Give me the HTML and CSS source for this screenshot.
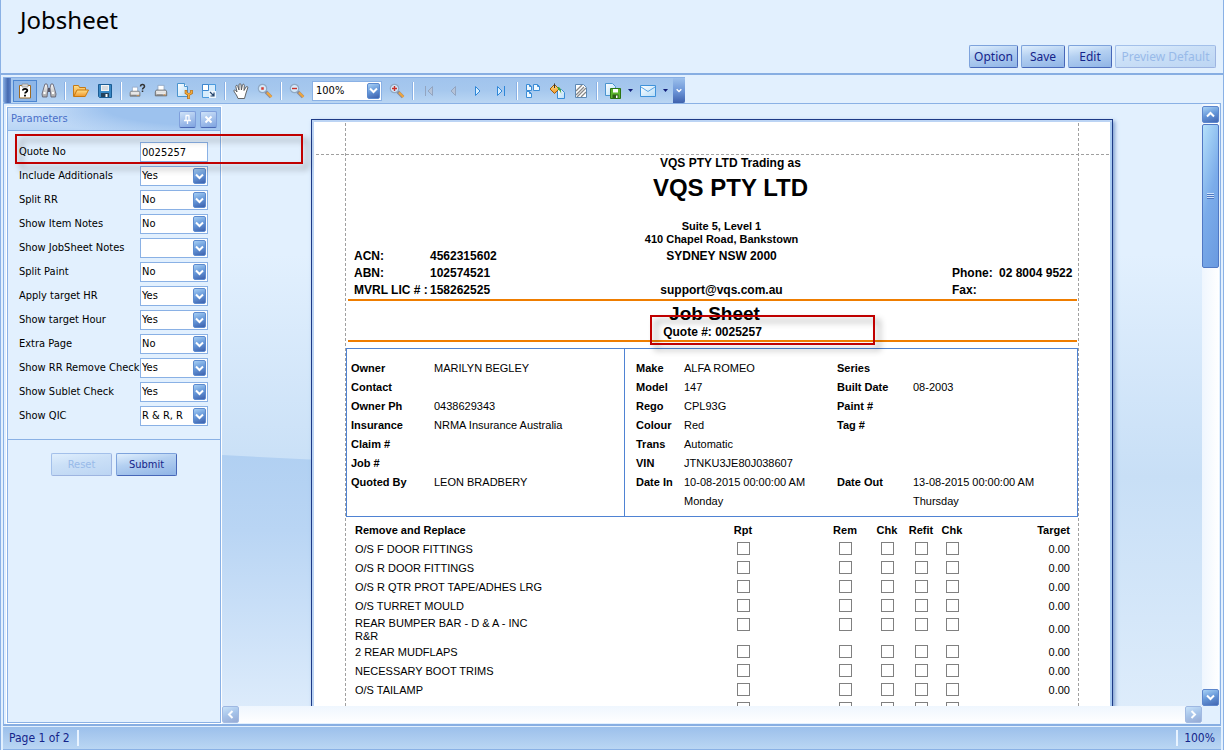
FILE: index.html
```html
<!DOCTYPE html>
<html lang="en">
<head>
<meta charset="utf-8">
<title>Jobsheet</title>
<link rel="stylesheet" href="styles.css">
</head>
<body>
<svg class="defs" width="0" height="0" aria-hidden="true">
  <defs>
    <linearGradient id="gold" x1="0" y1="0" x2="0" y2="1"><stop offset="0" stop-color="#ffe08a"/><stop offset="1" stop-color="#f0962a"/></linearGradient>
    <linearGradient id="sheet" x1="0" y1="0" x2="1" y2="1"><stop offset="0" stop-color="#ffffff"/><stop offset="1" stop-color="#b4dcf8"/></linearGradient>
    <linearGradient id="steel" x1="0" y1="0" x2="0" y2="1"><stop offset="0" stop-color="#fafafa"/><stop offset="1" stop-color="#a8a8a8"/></linearGradient>
    <symbol id="chev" viewBox="0 0 9 7"><path d="M1 1.5 4.500 5 8 1.500" fill="none" stroke="#fff" stroke-width="2"/></symbol>
    <symbol id="lens" viewBox="0 0 16 16"><path d="m8.500 8.500 5.500 5.500" stroke="#8a8a9a" stroke-width="3.600"/><path d="m10 9.500 4.500 4.500" stroke="#f0a63c" stroke-width="2.200"/><circle cx="5.500" cy="5.500" r="4.200" fill="#d4e8fa" stroke="#90a9c4" stroke-width="1.200"/></symbol>
    <symbol id="printer" viewBox="0 0 16 16"><path d="M4.500 7V1.500h7V7" fill="#fff" stroke="#8fa6c4"/><path d="M2.500 7h11l1 2v4.500h-13V9z" fill="url(#steel)" stroke="#666"/><path d="M3 10.500h10" stroke="#fff"/><path d="M3 12.500h7" stroke="#777"/><path d="M11 12h2v1h-2z" fill="#e88a20"/></symbol>
  </defs>
</svg>
<div class="app">
  <header class="top">
    <h1 class="title">Jobsheet</h1>
    <div class="actions">
      <button class="btn btn-option" type="button">Option</button>
      <button class="btn" type="button">Save</button>
      <button class="btn" type="button">Edit</button>
      <button class="btn btn-preview" type="button" disabled>Preview Default</button>
    </div>
  </header>

  <main class="viewer">
    <div class="toolbar" role="toolbar" aria-label="Report">
      <span class="grip"></span>
      <button class="tool pressed" type="button" aria-label="Parameters"><svg viewBox="0 0 16 16"><path d="M2.500 2.500h11v12.500h-11z" fill="#fff" stroke="#a06a22"/><path d="M5 1h6v3H5z" fill="#d9d9d9" stroke="#8a8a8a" stroke-width=".7"/><path d="M5.800 7.500c0-2.300 4.500-2.300 4.500 0 0 1.500-2.200 1.300-2.200 3M8 11.800v1.600" fill="none" stroke="#000" stroke-width="1.800"/></svg></button>
      <button class="tool" type="button" aria-label="Search"><svg viewBox="0 0 16 16"><path d="m3 4 1-3h2l1 4-1 9H1.500L1 11zM13 4l-1-3h-2L9 5l1 9h4.500l.5-3z" fill="url(#steel)" stroke="#667" stroke-width=".9"/><path d="M7 5h2v4H7z" fill="#556"/><path d="M2.500 10h2M11 10h2" stroke="#fff" stroke-width="2"/></svg></button>
      <span class="sep"></span>
      <button class="tool" type="button" aria-label="Open"><svg viewBox="0 0 16 16"><path d="M.5 13.500v-11h5l1 2h6v3" fill="url(#gold)" stroke="#c47a18"/><path d="M.8 13.500 4 7h11.500l-3.300 6.500z" fill="url(#gold)" stroke="#c8780f"/></svg></button>
      <button class="tool" type="button" aria-label="Save report"><svg viewBox="0 0 16 16"><path d="M1.500 1.500h13v13h-12l-1-1z" fill="#3988c4" stroke="#1b5c94"/><path d="M4 2h8v6H4z" fill="#f4f4f4"/><path d="M5 4h6M5 6h6" stroke="#b9c3cc"/><path d="M4 10h8v4H4z" fill="#23415c"/><path d="M8.500 11h2v3h-2z" fill="#fff"/></svg></button>
      <span class="sep"></span>
      <button class="tool" type="button" aria-label="Print with options"><svg viewBox="0 0 16 16"><use href="#printer" x="0" y="2" width="12" height="14"/><path d="M11.500 3.500c0-3 4-2.500 4 0 0 1.500-2 1.300-2 3M13.500 7.500V9" fill="none" stroke="#333" stroke-width="1.500"/></svg></button>
      <button class="tool" type="button" aria-label="Print"><svg viewBox="0 0 16 16"><use href="#printer" x="1" y="1" width="14" height="14"/></svg></button>
      <button class="tool" type="button" aria-label="Page setup"><svg viewBox="0 0 16 16"><path d="M.5.5h7l3 3v10H.5z" fill="url(#sheet)" stroke="#4a94cf"/><path d="M7.500.5v3h3" fill="#fff" stroke="#4a94cf"/><path d="M9 7v3l2.500 1.500V16M14.500 7v3L12 11.500" fill="none" stroke="#b36a0c" stroke-width="2.600"/><path d="M9 7.500v2.300l2.700 1.700v4M14.500 7.500v2.300L12 11.500" fill="none" stroke="#f5ab3d" stroke-width="1.400"/></svg></button>
      <button class="tool" type="button" aria-label="Scale"><svg viewBox="0 0 16 16"><path d="M1.500 1.500h13v13h-13z" fill="#d7ecfc" stroke="#4b9add"/><path d="M1.500 1.500h6v6h-6z" fill="#fff" stroke="#3d86cf"/><path d="M8 8h7v7H8z" fill="#eef7ff"/><path d="m9 9 4 4M13 9.500V13H9.500" fill="none" stroke="#26466e" stroke-width="1.200"/></svg></button>
      <span class="sep"></span>
      <button class="tool" type="button" aria-label="Hand tool"><svg viewBox="0 0 16 16"><path d="M5 15.500C4 12 1 9 .8 7.800 1 6.500 2.700 7 4 9L2.800 3.500c0-1.500 1.700-1.500 2 0L6 7 6 1.800c.2-1.500 1.900-1.500 2 0L8.400 7l1-5c.5-1.300 2-.9 1.900.4L11 7.500 13 4c1-1 2.200-.3 1.700 1L13 10l-1.500 5.500z" fill="#fff" stroke="#555" stroke-width=".9"/></svg></button>
      <button class="tool" type="button" aria-label="Magnifier"><svg viewBox="0 0 16 16"><use href="#lens" width="16" height="16"/><path d="M4.500 4.500h2v2h-2z" fill="#d53a2e" stroke="#d53a2e" stroke-width=".5"/></svg></button>
      <span class="sep"></span>
      <button class="tool" type="button" aria-label="Zoom out"><svg viewBox="0 0 16 16"><use href="#lens" width="16" height="16"/><path d="M3 5.500h5" stroke="#c8322a" stroke-width="1.400"/></svg></button>
      <div class="combo combo-zoom">
        <select aria-label="Zoom"><option>100%</option></select>
        <span class="drop"><svg><use href="#chev"/></svg></span>
      </div>
      <button class="tool" type="button" aria-label="Zoom in"><svg viewBox="0 0 16 16"><use href="#lens" width="16" height="16"/><path d="M3 5.500h5M5.500 3v5" stroke="#c8322a" stroke-width="1.400"/></svg></button>
      <span class="sep"></span>
      <button class="tool" type="button" aria-label="First page" disabled><svg viewBox="0 0 16 16"><path d="M4.500 3v10M11.500 3.500v9L7 8z" fill="#b5c3d8" stroke="#93a5c0"/></svg></button>
      <button class="tool" type="button" aria-label="Previous page" disabled><svg viewBox="0 0 16 16"><path d="M10.500 3.500v9L6 8z" fill="#b5c3d8" stroke="#93a5c0"/></svg></button>
      <button class="tool" type="button" aria-label="Next page"><svg viewBox="0 0 16 16"><path d="M6.500 3.500v9L11 8z" fill="#d6edff" stroke="#2f87d8"/></svg></button>
      <button class="tool" type="button" aria-label="Last page"><svg viewBox="0 0 16 16"><path d="M4.500 3.500v9L9 8zM11.500 3v10" fill="#d6edff" stroke="#2f87d8"/></svg></button>
      <span class="sep"></span>
      <button class="tool" type="button" aria-label="Multiple pages"><svg viewBox="0 0 16 16"><path d="M1.500 1.500h3l2 2v4h-5zM8.500 1.500h4l2 2v4h-6zM1.500 8.500h3l2 2v4h-5z" fill="#eef8ff" stroke="#3a8cd6"/><path d="M4.500 1.500v2h2M12.500 1.500v2h2M4.500 8.500v2h2" fill="none" stroke="#3a8cd6"/></svg></button>
      <button class="tool" type="button" aria-label="Page colour"><svg viewBox="0 0 16 16"><path d="M8.500 6.500h4l3 3v6h-7z" fill="url(#sheet)" stroke="#3a8cd6"/><path d="m1 6 4.500-4.500L10 6l-4.500 4.500z" fill="url(#gold)" stroke="#a15d0c"/><path d="M5.500 5V.5" stroke="#333"/><path d="M8.500 4c3 0 3.700 2.500 3.700 7-1-3-1.700-4-3-4z" fill="#3fa53a"/></svg></button>
      <button class="tool" type="button" aria-label="Watermark"><svg viewBox="0 0 16 16"><path d="M2.500 1.500h8l3 3v10h-11z" fill="#fff" stroke="#5c88b4"/><path d="m3 8 6-6M3 12l8-8M4 14l9-9M8 14l5-5" stroke="#888" stroke-width="1.300"/></svg></button>
      <span class="sep"></span>
      <button class="tool" type="button" aria-label="Export"><svg viewBox="0 0 16 16"><path d="M.5.5h7l3 3v9H.5z" fill="url(#sheet)" stroke="#4a94cf"/><path d="M5.500 5.500h10v10h-10z" fill="#5bb52c" stroke="#2c7412"/><path d="M8 6h5v3.500H8z" fill="#fff"/><path d="M7.500 11.500h6V15h-6z" fill="#2c5f18"/><path d="M11 12.500h1.500V15H11z" fill="#fff"/></svg></button>
      <button class="caret" type="button" aria-label="Export options"><svg viewBox="0 0 5 3"><path d="M0 0h5L2.500 3z" fill="#101c78"/></svg></button>
      <button class="tool" type="button" aria-label="Send by e-mail"><svg viewBox="0 0 16 16"><path d="M.5 2.500h15v11H.5z" fill="url(#sheet)" stroke="#3f92da"/><path d="m1 4 7 4.500L15 4" fill="none" stroke="#5aa4e2"/></svg></button>
      <button class="caret" type="button" aria-label="E-mail options"><svg viewBox="0 0 5 3"><path d="M0 0h5L2.500 3z" fill="#101c78"/></svg></button>
      <button class="overflow" type="button" aria-label="More"><svg width="6" height="5"><use href="#chev"/></svg></button>
    </div>

    <div class="work">
      <aside class="params">
        <div class="params-head">
          <h2>Parameters</h2>
          <button class="mini" type="button" aria-label="Pin"><svg viewBox="0 0 9 9"><path d="M2.500.5h4M3 1v4M6 1v4M1 5.500h7M4.500 6v3" fill="none" stroke="#fff" stroke-width="1.300"/></svg></button>
          <button class="mini" type="button" aria-label="Close"><svg viewBox="0 0 9 9"><path d="m1.500 1.500 6 6m0-6-6 6" stroke="#fff" stroke-width="2"/></svg></button>
        </div>
        <form class="fields">
          <div class="field"><label for="p1">Quote No</label><input id="p1" class="text" type="text" value="0025257"><span class="callout callout-field"></span></div>
          <div class="field"><label for="p2">Include Additionals</label><div class="combo"><select id="p2"><option>Yes</option></select><span class="drop"><svg><use href="#chev"/></svg></span></div></div>
          <div class="field"><label for="p3">Split RR</label><div class="combo"><select id="p3"><option>No</option></select><span class="drop"><svg><use href="#chev"/></svg></span></div></div>
          <div class="field"><label for="p4">Show Item Notes</label><div class="combo"><select id="p4"><option>No</option></select><span class="drop"><svg><use href="#chev"/></svg></span></div></div>
          <div class="field"><label for="p5">Show JobSheet Notes</label><div class="combo"><select id="p5"><option></option></select><span class="drop"><svg><use href="#chev"/></svg></span></div></div>
          <div class="field"><label for="p6">Split Paint</label><div class="combo"><select id="p6"><option>No</option></select><span class="drop"><svg><use href="#chev"/></svg></span></div></div>
          <div class="field"><label for="p7">Apply target HR</label><div class="combo"><select id="p7"><option>Yes</option></select><span class="drop"><svg><use href="#chev"/></svg></span></div></div>
          <div class="field"><label for="p8">Show target Hour</label><div class="combo"><select id="p8"><option>Yes</option></select><span class="drop"><svg><use href="#chev"/></svg></span></div></div>
          <div class="field"><label for="p9">Extra Page</label><div class="combo"><select id="p9"><option>No</option></select><span class="drop"><svg><use href="#chev"/></svg></span></div></div>
          <div class="field"><label for="p10">Show RR Remove Check</label><div class="combo"><select id="p10"><option>Yes</option></select><span class="drop"><svg><use href="#chev"/></svg></span></div></div>
          <div class="field"><label for="p11">Show Sublet Check</label><div class="combo"><select id="p11"><option>Yes</option></select><span class="drop"><svg><use href="#chev"/></svg></span></div></div>
          <div class="field"><label for="p12">Show QIC</label><div class="combo"><select id="p12"><option>R &amp; R, R</option></select><span class="drop"><svg><use href="#chev"/></svg></span></div></div>
        </form>
        <div class="params-foot">
          <button class="btn btn-form" type="button" disabled>Reset</button>
          <button class="btn btn-form" type="button">Submit</button>
        </div>
      </aside>

      <div class="canvas">
        <article class="paper">
          <section class="letterhead">
            <dl class="ids">
              <dt>ACN:</dt><dd>4562315602</dd>
              <dt>ABN:</dt><dd>102574521</dd>
              <dt>MVRL LIC # :</dt><dd>158262525</dd>
            </dl>
            <div class="company">
              <p class="trading">VQS PTY LTD Trading as</p>
              <p class="name">VQS PTY LTD</p>
              <p class="street">Suite 5, Level 1</p>
              <p class="street">410 Chapel Road, Bankstown</p>
              <p class="city">SYDNEY NSW 2000</p>
              <p class="mail">support@vqs.com.au</p>
            </div>
            <dl class="phones">
              <dt>Phone:</dt><dd>02 8004 9522</dd>
              <dt>Fax:</dt><dd></dd>
            </dl>
          </section>
          <section class="banner">
            <h2>Job Sheet</h2>
            <p class="quote">Quote #: 0025257<span class="callout callout-quote"></span></p>
          </section>
          <section class="details">
            <dl class="owner">
              <dt>Owner</dt><dd>MARILYN BEGLEY</dd>
              <dt>Contact</dt><dd></dd>
              <dt>Owner Ph</dt><dd>0438629343</dd>
              <dt>Insurance</dt><dd>NRMA Insurance Australia</dd>
              <dt>Claim #</dt><dd></dd>
              <dt>Job #</dt><dd></dd>
              <dt>Quoted By</dt><dd>LEON BRADBERY</dd>
            </dl>
            <dl class="vehicle">
              <dt>Make</dt><dd>ALFA ROMEO</dd><dt>Series</dt><dd></dd>
              <dt>Model</dt><dd>147</dd><dt>Built Date</dt><dd>08-2003</dd>
              <dt>Rego</dt><dd>CPL93G</dd><dt>Paint #</dt><dd></dd>
              <dt>Colour</dt><dd>Red</dd><dt>Tag #</dt><dd></dd>
              <dt>Trans</dt><dd class="wide">Automatic</dd>
              <dt>VIN</dt><dd class="wide">JTNKU3JE80J038607</dd>
              <dt>Date In</dt><dd>10-08-2015 00:00:00 AM<br>Monday</dd><dt>Date Out</dt><dd>13-08-2015 00:00:00 AM<br>Thursday</dd>
            </dl>
          </section>
          <table class="items">
            <colgroup><col><col class="c-rpt"><col class="c-rem"><col class="c-chk"><col class="c-refit"><col class="c-chk2"><col class="c-target"></colgroup>
            <thead><tr><th>Remove and Replace</th><th class="rpt">Rpt</th><th>Rem</th><th>Chk</th><th>Refit</th><th>Chk</th><th>Target</th></tr></thead>
            <tbody>
              <tr><td>O/S F DOOR FITTINGS</td><td class="rpt"><input type="checkbox" aria-label="Rpt"></td><td><input type="checkbox" aria-label="Rem"></td><td><input type="checkbox" aria-label="Rem checked"></td><td><input type="checkbox" aria-label="Refit"></td><td><input type="checkbox" aria-label="Refit checked"></td><td>0.00</td></tr>
              <tr><td>O/S R DOOR FITTINGS</td><td class="rpt"><input type="checkbox" aria-label="Rpt"></td><td><input type="checkbox" aria-label="Rem"></td><td><input type="checkbox" aria-label="Rem checked"></td><td><input type="checkbox" aria-label="Refit"></td><td><input type="checkbox" aria-label="Refit checked"></td><td>0.00</td></tr>
              <tr><td>O/S R QTR PROT TAPE/ADHES LRG</td><td class="rpt"><input type="checkbox" aria-label="Rpt"></td><td><input type="checkbox" aria-label="Rem"></td><td><input type="checkbox" aria-label="Rem checked"></td><td><input type="checkbox" aria-label="Refit"></td><td><input type="checkbox" aria-label="Refit checked"></td><td>0.00</td></tr>
              <tr><td>O/S TURRET MOULD</td><td class="rpt"><input type="checkbox" aria-label="Rpt"></td><td><input type="checkbox" aria-label="Rem"></td><td><input type="checkbox" aria-label="Rem checked"></td><td><input type="checkbox" aria-label="Refit"></td><td><input type="checkbox" aria-label="Refit checked"></td><td>0.00</td></tr>
              <tr class="tall"><td>REAR BUMPER BAR - D &amp; A - INC<br>R&amp;R</td><td class="rpt"><input type="checkbox" aria-label="Rpt"></td><td><input type="checkbox" aria-label="Rem"></td><td><input type="checkbox" aria-label="Rem checked"></td><td><input type="checkbox" aria-label="Refit"></td><td><input type="checkbox" aria-label="Refit checked"></td><td>0.00</td></tr>
              <tr><td>2 REAR MUDFLAPS</td><td class="rpt"><input type="checkbox" aria-label="Rpt"></td><td><input type="checkbox" aria-label="Rem"></td><td><input type="checkbox" aria-label="Rem checked"></td><td><input type="checkbox" aria-label="Refit"></td><td><input type="checkbox" aria-label="Refit checked"></td><td>0.00</td></tr>
              <tr><td>NECESSARY BOOT TRIMS</td><td class="rpt"><input type="checkbox" aria-label="Rpt"></td><td><input type="checkbox" aria-label="Rem"></td><td><input type="checkbox" aria-label="Rem checked"></td><td><input type="checkbox" aria-label="Refit"></td><td><input type="checkbox" aria-label="Refit checked"></td><td>0.00</td></tr>
              <tr><td>O/S TAILAMP</td><td class="rpt"><input type="checkbox" aria-label="Rpt"></td><td><input type="checkbox" aria-label="Rem"></td><td><input type="checkbox" aria-label="Rem checked"></td><td><input type="checkbox" aria-label="Refit"></td><td><input type="checkbox" aria-label="Refit checked"></td><td>0.00</td></tr>
              <tr><td></td><td class="rpt"><input type="checkbox" aria-label="Rpt"></td><td><input type="checkbox" aria-label="Rem"></td><td><input type="checkbox" aria-label="Rem checked"></td><td><input type="checkbox" aria-label="Refit"></td><td><input type="checkbox" aria-label="Refit checked"></td><td></td></tr>
            </tbody>
          </table>
        </article>
      </div>

      <div class="vscroll">
        <button class="sb up" type="button" aria-label="Scroll up"><svg><use href="#chev"/></svg></button>
        <div class="thumb"><span></span></div>
        <button class="sb" type="button" aria-label="Scroll down"><svg><use href="#chev"/></svg></button>
      </div>
      <div class="hscroll">
        <button class="sb left" type="button" aria-label="Scroll left" disabled><svg><use href="#chev"/></svg></button>
        <button class="sb right" type="button" aria-label="Scroll right" disabled><svg><use href="#chev"/></svg></button>
      </div>
    </div>

    <footer class="status"><span class="page-no">Page 1 of 2</span><span class="zoom">100%</span></footer>
  </main>
</div>
</body>
</html>
```

FILE: styles.css
```css
* { box-sizing: border-box; }
html, body { height: 100%; }
body {
  margin: 0;
  overflow: hidden;
  background: #e2f0fe;
  color: #000;
  font: 11px/14px "DejaVu Sans Condensed", "DejaVu Sans", sans-serif;
}
h1, h2, p, dl, dd { margin: 0; }
h1, h2 { font-weight: normal; }
button { font: inherit; padding: 0; border: 0; background: none; display: flex; align-items: center; justify-content: center; flex: none; }
svg { display: block; overflow: visible; }
.defs { position: absolute; }

.app { height: 100%; display: flex; flex-direction: column; border: solid #8ab1e5; border-width: 0 1px; }
.top { flex: none; display: flex; flex-direction: column; justify-content: space-between; height: 75px; padding: 5px 7px 5px 19px; border-bottom: 2px solid #87aee2; }
.title { font: 24px/30px "Noto Sans", sans-serif; }
.actions { display: flex; justify-content: flex-end; gap: 3px; }
.btn {
  height: 23px;
  width: 44px;
  border: 1px solid #4767b8;
  border-top-color: #7ea3dc;
  border-left-color: #7ea3dc;
  border-radius: 2px;
  background: linear-gradient(170deg, #e0effd, #b4d0f1 40%, #8fb4e6);
  color: #14248a;
  font: 12px/16px "Noto Sans", sans-serif;
}
.btn:disabled { border-color: #a3c0ea #9db4e0 #9db4e0 #a3c0ea; background: linear-gradient(170deg, #e0effd, #cbe0f7 40%, #bcd5f3); color: #98bae9; }
.btn-option { width: 49px; }
.btn-preview { width: 101px; }
.btn-form { width: 61px; font: 11px/14px "DejaVu Sans Condensed", sans-serif; }

.viewer { flex: 1; min-height: 0; display: flex; flex-direction: column; margin: 2px 2px 0; }
.toolbar { flex: none; align-self: flex-start; display: flex; align-items: center; height: 26px; border-top: 1px solid #8ab1e5; background: linear-gradient(#a1c4ed, #a6c8ee 50%, #bad6f3); }
.grip { width: 8px; height: 25px; margin-right: 2px; border-radius: 0 0 0 2px; background: linear-gradient(90deg, #8ab1e5, #4469b0 60%, #5f86cc); }
.tool { width: 24px; height: 22px; }
.tool svg { width: 16px; height: 16px; }
.pressed { border: 1px solid #4d86d0; background: #8db6e8; }
.sep { width: 2px; height: 18px; margin: 0 3px; border-left: 1px solid #8ab1e5; border-right: 1px solid #fff; }
.caret { width: 11px; height: 22px; }
.caret svg { width: 5px; height: 3px; }
.overflow { width: 12px; height: 25px; margin-left: 2px; border-radius: 0 2px 2px 0; background: linear-gradient(#9cc0ec, #6a93d6 55%, #3f62ad); }

.combo { display: grid; width: 68px; height: 20px; border: 1px solid #8ab1e5; background: #fff; }
.combo > * { grid-area: 1 / 1; }
.combo select { appearance: none; width: 100%; height: 18px; border: 0; padding: 0 15px 0 1px; background: none; color: #000; font: inherit; }
.drop { justify-self: end; align-self: center; display: grid; place-items: center; width: 13px; height: 16px; margin-right: 1px; border: 1px solid #5d8bcf; border-radius: 2px; background: linear-gradient(160deg, #a8d0f5, #6496d8 50%, #3d60ac); pointer-events: none; }
.drop svg, .sb svg { width: 9px; height: 7px; }
.combo-zoom { width: 70px; margin: 0 3px; }
.combo-zoom select { padding-left: 3px; }

.work {
  position: relative;
  flex: 1;
  min-height: 0;
  display: grid;
  grid-template: minmax(0, 1fr) 17px / 218px minmax(0, 1fr) 17px;
  padding: 0 1px 1px 0;
  border: 1px solid #8ab1e5;
  border-bottom: 2px solid #87aee2;
}
.params { grid-row: 1 / 3; display: flex; flex-direction: column; margin: 3px 1px 0 3px; border: 1px solid #8ab1e5; outline: 1px solid #fff; z-index: 1; background: #e2f0fe; }
.params-head { flex: none; display: flex; align-items: center; gap: 4px; height: 23px; padding: 0 3px; border-bottom: 1px solid #8ab1e5; background: radial-gradient(ellipse 190px 30px at 100% 0, #9dc2ee 60%, transparent 100%), linear-gradient(#d2e4fa, #b9d5f5); color: #4a6fc8; }
.params-head h2 { flex: 1; font-size: 11px; }
.mini { width: 17px; height: 17px; border: 1px solid #7f9fdb; border-bottom-color: #4a68b4; border-radius: 2px; background: linear-gradient(160deg, #cfe3f9, #7ea3e0); }
.mini svg { width: 9px; height: 9px; }
.fields { display: grid; gap: 4px; padding: 11px 12px 13px 11px; border-bottom: 1px solid #8ab1e5; }
.field { position: relative; display: flex; align-items: center; justify-content: space-between; height: 20px; white-space: nowrap; }
.field label { width: 120px; line-height: 16px; }
.text { width: 68px; height: 20px; border: 1px solid #8ab1e5; padding: 0 1px; background: #fff; font: inherit; }
.params-foot { display: flex; justify-content: center; gap: 4px; padding-top: 13px; }
.callout { position: absolute; border: 2px solid #c00000; filter: drop-shadow(5px 5px 3px rgba(0, 0, 0, 0.4)); pointer-events: none; z-index: 2; }
.callout-field { left: -4px; top: -8px; width: 288px; height: 30px; }
.callout-quote { left: -13px; top: -8px; width: 225px; height: 30px; }

.canvas { position: relative; overflow: hidden; padding-top: 15px; background: linear-gradient(#e2f0fe 25%, #c8dff6 62%, #ddecfb); }
.canvas::before { content: ""; position: absolute; left: 0; right: 50%; top: 351px; bottom: 0; clip-path: polygon(0 0, 20% 5px, 100% 40px, 100% 100%, 0 100%); background: linear-gradient(#b1d0f2, #b9d5f4 30%, #dcebfb); }
.paper {
  position: relative;
  width: 802px;
  height: 1131px;
  margin: 0 auto;
  padding: 34px 34px 0;
  border: 1px solid #1d3a86;
  background: #fff;
  box-shadow: inset 2px 2px #bcd4f4, inset -2px 0 #a9cbf2, 2px 2px 4px #7f9fd0;
  font: 11px/13px "Liberation Sans", Arial, sans-serif;
}
.paper::before { content: ""; position: absolute; left: 33px; right: 33px; top: 3px; bottom: 3px; border: dashed #a0a0a0; border-width: 0 1px; pointer-events: none; }
.paper::after { content: ""; position: absolute; left: 4px; right: 3px; top: 34px; border-top: 1px dashed #a0a0a0; }
.letterhead { display: grid; grid-template-columns: 216px minmax(0, 1fr) 198px; height: 147px; margin: 0 1px 0 2px; border-bottom: 2px solid #ef7d00; font-weight: bold; font-size: 12px; line-height: 17px; align-items: end; }
.letterhead dl { display: grid; }
.ids { grid-template-columns: 76px 1fr; padding-left: 6px; white-space: nowrap; }
.phones { grid-template-columns: 47px 1fr; padding-left: 73px; white-space: nowrap; }
.company { align-self: stretch; text-align: center; }
.trading { padding-left: 18px; line-height: 18px; }
.name { padding-left: 18px; font-size: 24px; line-height: 32px; margin-bottom: 16px; }
.street { font-size: 11px; line-height: 13px; }
.city { line-height: 20px; margin-bottom: 16px; }
.banner { margin: 0 1px 6px 2px; height: 41px; border-bottom: 2px solid #ef7d00; }
.banner h2 { padding: 3px 0 0 4px; font: bold 19px/19px "Liberation Sans", Arial, sans-serif; text-align: center; }
.quote { position: relative; width: max-content; margin: 0 auto; font: bold 12px/18px "Liberation Sans", Arial, sans-serif; }
.details { display: grid; grid-template-columns: 278px 1fr; border: 1px solid #4f83d3; line-height: 19px; }
.details dl { display: grid; align-content: start; padding: 10px 0 5px; }
.details dt { font-weight: bold; }
.owner { grid-template-columns: 83px 1fr; border-right: 1px solid #4f83d3; }
.details .owner { padding-left: 4px; }
.vehicle { grid-template-columns: 48px 153px 76px 1fr; }
.details .vehicle { padding-left: 11px; }
.wide { grid-column: span 3; }
.items { width: 100%; margin-top: 4px; table-layout: fixed; border-collapse: collapse; }
.c-rpt { width: 104px; }
.c-rem { width: 46px; }
.c-chk { width: 38px; }
.c-refit { width: 30px; }
.c-chk2 { width: 32px; }
.c-target { width: 110px; }
.items th, .items td { height: 19px; padding: 0; text-align: center; vertical-align: middle; white-space: nowrap; }
.items th:first-child, .items td:first-child { padding-left: 9px; text-align: left; }
.items th:last-child, .items td:last-child { padding-right: 8px; text-align: right; }
.items .rpt { padding-right: 54px; }
.items input { appearance: none; display: block; width: 13px; height: 13px; margin: 0 auto; border: 1px solid #808080; background: #fff; }
.items .tall td { height: 27px; }
.items td:has(input) { vertical-align: top; padding-top: 2px; }

.vscroll { display: flex; flex-direction: column; padding-top: 2px; background: linear-gradient(90deg, #eff6fe, #fff); }
.hscroll { grid-column: 2; display: flex; justify-content: space-between; background: linear-gradient(#eff6fe, #fff); }
.sb { width: 17px; height: 17px; border: 1px solid #5d86cc; border-radius: 2px; background: linear-gradient(160deg, #a8d2f6, #6496d8 50%, #4266b2); }
.sb:disabled { opacity: 0.55; }
.up svg { transform: rotate(180deg); }
.left svg { transform: rotate(90deg); }
.right svg { transform: rotate(-90deg); }
.thumb { flex: none; display: grid; place-items: center; height: 24%; margin: 1px 0 auto; border: 1px solid #5078c4; border-radius: 2px; background: linear-gradient(105deg, #b4e0fa, #7bacea 50%, #6a9ae0); }
.thumb span { width: 7px; height: 6px; background: repeating-linear-gradient(#cfe2fa 0 1px, #4c76c2 1px 2px); }

.status { flex: none; display: flex; justify-content: space-between; align-items: center; height: 23px; margin-top: 1px; border-bottom: 1px solid #8ab1e5; background: linear-gradient(#9cc0eb, #bad6f3); color: #14248a; font: 12px/16px "DejaVu Sans Condensed", sans-serif; }
.page-no { padding: 0 7px 0 6px; border-right: 2px solid #e8f3ff; }
.zoom { padding: 0 6px; border-left: 2px solid #e8f3ff; }
```
